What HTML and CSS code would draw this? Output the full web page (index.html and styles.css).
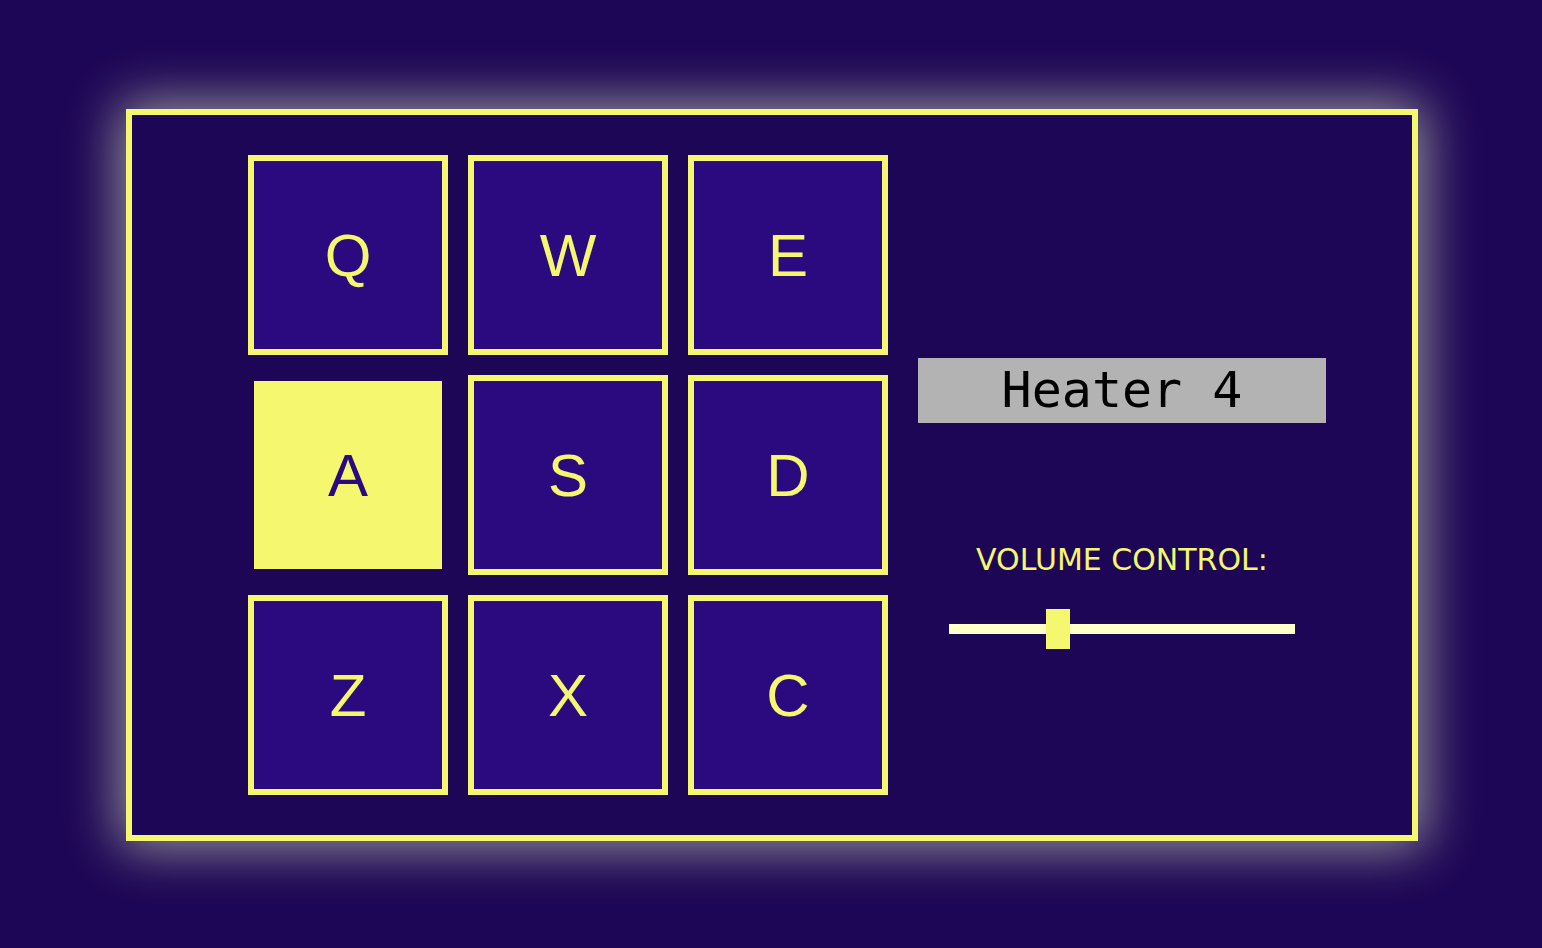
FILE: index.html
```html
<!DOCTYPE html>
<html lang="en">
<head>
<meta charset="utf-8">
<title>Drum Machine</title>
<link rel="stylesheet" href="styles.css">
</head>
<body>
<div class="machine">
  <div class="pads">
    <div class="pad">Q</div>
    <div class="pad">W</div>
    <div class="pad">E</div>
    <div class="pad active">A</div>
    <div class="pad">S</div>
    <div class="pad">D</div>
    <div class="pad">Z</div>
    <div class="pad">X</div>
    <div class="pad">C</div>
  </div>
  <div class="controls">
    <div class="display">Heater 4</div>
    <div class="volume-label">VOLUME CONTROL:</div>
    <input class="volume" type="range" min="0" max="1" step="0.01" value="0.3">
  </div>
</div>
</body>
</html>
```
FILE: styles.css
```css
html, body {
  margin: 0;
  padding: 0;
}
body {
  background: #1e0656;
  min-height: 100vh;
  box-sizing: border-box;
  padding: 2px 0 0 2px;
  display: flex;
  align-items: center;
  justify-content: center;
  font-family: "Liberation Sans", Arial, sans-serif;
}
.machine {
  width: 1292px;
  height: 732px;
  box-sizing: border-box;
  border: 6px solid #f5f76e;
  background: #1e0656;
  box-shadow: 0 0 50px 6px #999999;
  display: flex;
  padding: 40px 86px 40px 116px;
  gap: 30px;
}
.pads {
  display: grid;
  grid-template-columns: repeat(3, 200px);
  grid-template-rows: repeat(3, 200px);
  gap: 20px;
}
.pad {
  box-sizing: border-box;
  border: 6px solid #f5f76e;
  background: #2a0a7e;
  color: #f5f76e;
  font-size: 60px;
  display: flex;
  align-items: center;
  justify-content: center;
}
.pad.active {
  background: #f5f76e;
  border-color: #1e0656;
  color: #2a0a7e;
}
.controls {
  width: 408px;
  display: flex;
  flex-direction: column;
  align-items: center;
  padding-top: 203px;
}
.display {
  width: 408px;
  height: 65px;
  background: #b3b3b3;
  color: #000;
  font-family: "DejaVu Sans Mono", monospace;
  font-size: 50px;
  line-height: 65px;
  text-align: center;
}
.volume-label {
  margin-top: 119px;
  color: #f5f76e;
  font-family: "DejaVu Sans", Verdana, sans-serif;
  font-size: 30px;
  line-height: 35px;
}
.volume {
  -webkit-appearance: none;
  appearance: none;
  margin: 32px 0 0 0;
  width: 346px;
  height: 40px;
  background: transparent;
  padding: 0;
}
.volume::-webkit-slider-runnable-track {
  height: 10px;
  background: #ffffc8;
  border: none;
}
.volume::-webkit-slider-thumb {
  -webkit-appearance: none;
  appearance: none;
  width: 24px;
  height: 40px;
  margin-top: -15px;
  background: #f5f76e;
  border: none;
  border-radius: 0;
}
```
